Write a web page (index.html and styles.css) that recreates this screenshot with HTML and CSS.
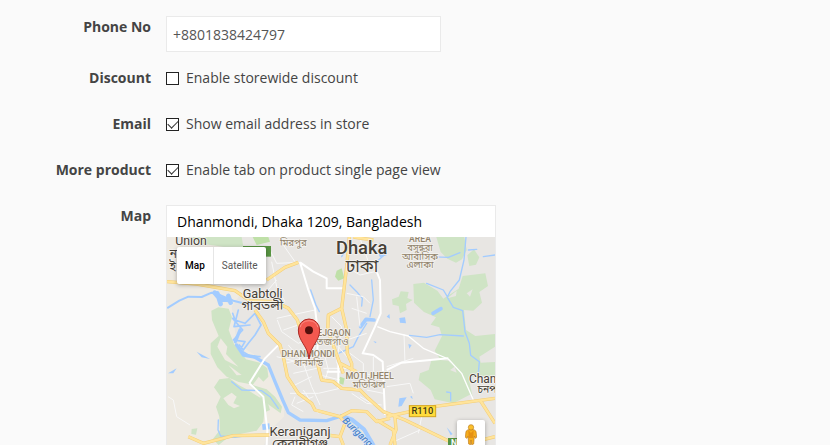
FILE: index.html
```html
<!DOCTYPE html>
<html lang="en">
<head>
<meta charset="utf-8">
<title>Store settings</title>
<link rel="stylesheet" href="styles.css">
</head>
<body>
<form class="settings">
  <div class="row">
    <label class="name" for="phone">Phone No</label>
    <input class="field" id="phone" type="text" value="+8801838424797">
  </div>
  <div class="row">
    <label class="name" for="discount">Discount</label>
    <label class="option"><input class="tick" id="discount" type="checkbox">Enable storewide discount</label>
  </div>
  <div class="row">
    <label class="name" for="email">Email</label>
    <label class="option"><input class="tick" id="email" type="checkbox" checked>Show email address in store</label>
  </div>
  <div class="row">
    <label class="name" for="more">More product</label>
    <label class="option"><input class="tick" id="more" type="checkbox" checked>Enable tab on product single page view</label>
  </div>
  <div class="row">
    <label class="name" for="address">Map</label>
    <div class="location">
      <input class="address" id="address" type="text" value="Dhanmondi, Dhaka 1209, Bangladesh">
      <div class="map">
        <svg class="canvas" viewBox="21 21 984 624" preserveAspectRatio="xMinYMin slice">
          <rect x="21" y="21" width="984" height="624" fill="#e8e6e3"/>
          <!-- western countryside -->
          <path fill="#efebe3" d="M21 21H175L215 90 250 180 215 230 230 340 300 385 340 430 372 520 372 560 330 600 312 645H21Z"/>
          <!-- parks and wetlands -->
          <g fill="#cfe4c5">
            <path d="M80 21H245L250 50H190L130 42 100 30Z"/>
            <path d="M154 242L175 232 206 236 216 262 206 300 222 342 258 388 300 398 322 415 325 440 310 455 296 440 278 465 320 478 345 500 366 530 362 550 320 520 268 462 236 456 200 440 172 412 152 372 152 340 176 318 156 270Z"/>
            <path d="M162 472L178 448 208 444 236 465 260 478 308 508 314 540 310 575 290 602 240 612 205 622 176 645 158 628 180 600 178 560 168 530 182 500Z"/>
            <path d="M300 500L322 514 330 540 318 545ZM95 597L112 595 108 614 94 612Z"/>
            <path d="M829 21H913L920 60 906 88 888 98 862 86 842 66Z"/>
            <path d="M942 58L958 82 948 104 928 108 922 76Z"/>
            <path d="M760 162L792 158 832 182 850 206 866 196 896 176 908 138 976 130 984 168 958 186 966 218 940 242 912 240 918 300 946 318 1005 312V350L958 380 962 398 1005 396V440H925L938 500 902 460 866 388 842 390 824 362 846 318 838 292 812 284 828 262 792 246 762 218Z"/>
            <path d="M815 388L866 392 902 438 934 492 880 520 824 508 812 480 776 450 780 430 806 420Z"/>
            <path d="M696 208L716 200 722 184 746 186 742 204 758 210 738 222 740 240 720 250 716 228 698 224Z"/>
          </g>
          <g fill="#efebe3">
            <path d="M182 325L202 350 198 372 235 410 195 390 172 350ZM205 405L245 435 230 436ZM190 505L215 488 230 500 220 520 240 528 222 535 205 525Z"/>
          </g>
          <g fill="#e8e6e3">
            <path d="M862 205L890 182 888 198ZM920 190L938 178 930 200ZM870 420L884 410 890 428ZM940 265L960 250 970 274 950 290Z"/>
          </g>
          <g fill="#bfe0a8">
            <path d="M530 122L545 115 553 145 535 152 525 140ZM540 440L554 445 550 464 532 458ZM278 21H325L330 35 290 45Z"/>
          </g>
          <!-- rivers -->
          <g fill="none" stroke="#a3ccff" stroke-linecap="round" stroke-linejoin="round">
            <path stroke-width="6" d="M24 233L58 212 85 200 125 201 155 188 182 196 220 212 270 225"/>
            <path stroke-width="14" d="M164 188L178 205 205 210M172 190L182 222M205 198L212 218"/>
            <path stroke-width="5" d="M218 250L225 270 255 280 285 250 303 285 285 315 265 340 250 360 238 345M218 265L248 300 220 330 255 335 240 360 270 378 300 380M235 240L222 290 270 285"/>
            <path stroke-width="10" d="M240 300L226 335M230 345L250 375 290 382"/>
            <path stroke-width="10" d="M285 382L325 405 345 455 368 510 385 548 420 570 500 572 545 558"/>
            <path stroke-width="12" d="M545 558L575 568 612 598 640 645"/>
            <path stroke-width="4" d="M215 455L245 480 305 482 330 500 355 535M175 570L174 600 182 618 225 622 250 618M452 180L468 225 478 245M570 165L590 185 607 205 605 228M635 150L640 210 630 260M620 280L595 320 580 350 535 370M918 21L912 90 898 150 870 185 862 202 880 232 908 242 915 305 928 340 932 376 958 395 955 430M748 316L800 322 840 314 910 318M800 160L850 180 862 200"/>
            <path stroke-width="4" d="M660 40L678 70 650 95M560 55L545 80M800 80L865 82 900 68M925 60L950 58M860 486L872 488 872 512M1005 75L970 80"/>
            <path stroke-width="11" d="M642 270L618 268 602 290M819 250L843 236"/>
          </g>
          <g fill="#a3ccff">
            <path d="M24 430L50 415 40 430ZM110 365L150 387 125 382ZM715 530L718 505 740 502 725 528ZM718 264L735 262 738 280 720 278ZM745 342L755 345 748 356ZM860 592L878 612 872 616ZM306 583L328 580 330 598 308 600ZM650 60L670 50 682 75 660 82ZM680 260L688 252 690 266ZM750 500L756 498 758 508ZM640 333L650 336 646 340Z"/>
          </g>
          <!-- minor streets -->
          <g fill="none" stroke="#f8f8f8" stroke-width="3" stroke-linejoin="round">
            <path d="M330 60L350 100 420 97M335 95L350 170 375 215M350 150L320 185M370 45L405 95M600 25L625 95 655 120M575 120L600 135 645 125M350 265L395 255 465 240M352 270L365 305 415 340M370 300L430 280M385 345L430 400 455 470 480 525M350 380L410 395M375 400L455 380 470 330M415 340L475 310M400 430L470 415M395 470L455 440M390 490L475 490 540 475M405 500L395 525 430 545M410 520L460 500M490 415H560M480 435L540 450M495 380L505 420 495 450M515 260L545 290 530 400M560 190L610 200 630 220M575 235L620 250M590 200L600 290M560 330L620 310M570 370L610 400 610 470M610 430L660 440M620 480L670 490M600 500L670 540M680 410L760 385M640 380L640 430M535 350L565 385M575 490L620 520 665 525M430 480L475 550M24 500L40 510 50 560 90 585M680 470L750 460 760 490M785 560L775 610M690 640L780 600M732 312L735 400"/>
          </g>
          <g fill="none" stroke="#fff" stroke-width="6" stroke-linejoin="round">
            <path d="M420 97L460 125 500 145V175H555M420 97L445 180 465 235 475 315 470 390M640 100L660 150 662 250 645 290 608 370 640 375 668 395 675 555M680 420L725 398 865 385M268 460L310 500 322 600 320 645M268 460L315 385 360 340M535 400V475M500 425H540"/>
            <path stroke-width="4" d="M652 290L690 305 745 318 790 355 865 387 905 430 940 510"/>
          </g>
          <!-- main roads -->
          <defs>
            <path id="roads" d="M21 155L110 162 225 182 268 212 345 215 385 235 412 270 425 310M320 150L375 112 415 97M285 240L310 275 325 310 360 345 372 390 382 440 415 490 455 520 465 540 540 560 575 542 620 545 650 575 690 565M568 21L560 110 545 235 505 255 503 300 525 360 550 430M545 235L560 300 562 370 575 400 575 425M470 390L485 450 520 455 545 475 600 480 625 505 670 545 735 570 880 640M540 400L590 425M680 560L750 545M820 530L1005 505M540 560L555 580 540 620 550 645M705 560L708 600 690 645M650 570L700 600 705 645M85 620L130 640 220 617 330 615M500 615L540 620M960 510L1005 580M925 640L1005 620M580 21L640 30"/>
          </defs>
          <use href="#roads" fill="none" stroke="#f3cd77" stroke-width="10" stroke-linejoin="round"/>
          <use href="#roads" fill="none" stroke="#ffe49b" stroke-width="7" stroke-linejoin="round"/>
          <rect x="249" y="48" width="84" height="32" fill="#589442"/>
          <rect x="864" y="624" width="60" height="30" fill="#589442"/>
          <rect x="748" y="527" width="79" height="33" fill="#ffdc3c" stroke="#d3a51f" stroke-width="3"/>
          <g class="place">
            <text x="93" y="46" font-size="37">Union</text>
            <text x="40" y="84" font-size="36">ন</text>
            <text x="38" y="122" font-size="36">ই</text>
            <text x="308" y="203" font-size="38">Gabtoli</text>
            <text x="307" y="239" font-size="39">গাবতলী</text>
            <text x="420" y="617" font-size="39">Keraniganj</text>
            <text x="420" y="653" font-size="39">কেরানীগঞ্জ</text>
            <text x="968" y="459" font-size="36">Chan</text>
            <text x="981" y="488" font-size="31">চনপ</text>
            <text class="city" x="605" y="71" font-size="55">Dhaka</text>
            <text x="606" y="127" font-size="52">ঢাকা</text>
          </g>
          <g class="district">
            <text x="400" y="47" font-size="29">মিরপুর</text>
            <text class="caps" x="780" y="37" font-size="26">AREA</text>
            <text x="780" y="63" font-size="28">বসুন্ধরা</text>
            <text x="780" y="89" font-size="29">আবাসিক</text>
            <text x="780" y="115" font-size="29">এলাকা</text>
            <text class="caps" x="514" y="318" font-size="26">TEJGAON</text>
            <text x="512" y="344" font-size="30">তেজগাঁও</text>
            <text class="caps" x="444" y="381" font-size="27">DHANMONDI</text>
            <text x="446" y="407" font-size="28">ধানমন্ডি</text>
            <text class="caps" x="629" y="447" font-size="27">MOTIJHEEL</text>
            <text x="627" y="474" font-size="29">মতিঝিল</text>
          </g>
          <text class="road" x="787" y="553" font-size="28">R110</text>
          <text class="highway" x="882" y="648" font-size="26">N</text>
          <text class="river" transform="translate(546 574) rotate(44)" font-size="29">Buriganga</text>
          <!-- location marker -->
          <path d="M447 387C444 347 415 335 415 300A32 33 0 0 1 479 300C479 335 450 347 447 387Z" fill="#f3584f" stroke="#ad2a24" stroke-width="3"/>
          <path d="M420 292A28 27 0 0 1 474 292" fill="none" stroke="#ff8f86" stroke-width="3"/>
          <circle cx="447" cy="301" r="12" fill="#54100d"/>
        </svg>
        <div class="types">
          <button class="type active" type="button">Map</button>
          <button class="type" type="button">Satellite</button>
        </div>
        <button class="pegman" type="button" aria-label="Street View">
          <svg viewBox="0 0 36 63" width="12" height="21">
            <path d="M9 17L3 22 1 40 6 43 9 36 11 60 17 62 18 48 20 62 26 60 28 36 31 43 35 40 33 22 27 17Z" fill="#f6ad1d" stroke="#bd7b1d" stroke-width="2"/>
            <path d="M10 19L18 27 26 19 25 42H11Z" fill="#e59113"/>
            <circle cx="18" cy="10" r="8" fill="#fbc02d" stroke="#b97c1c" stroke-width="2"/>
          </svg>
        </button>
      </div>
    </div>
  </div>
</form>
</body>
</html>
```
FILE: styles.css
```css
* {
  box-sizing: border-box;
}

body {
  margin: 0;
  background: #fafafa;
  color: #444;
  font: 14px/22px "Open Sans", sans-serif;
}

.settings {
  display: flex;
  flex-direction: column;
  gap: 15px;
  padding-top: 16px;
}

.row {
  display: grid;
  grid-template-columns: 151px minmax(0, 1fr);
  column-gap: 15px;
  align-items: start;
  min-height: 31px;
}

.name {
  font-weight: 700;
  text-align: right;
}

.field {
  width: 100%;
  max-width: 275px;
  height: 36px;
  padding: 0 6px;
  border: 1px solid #eaeaea;
  background: #fff;
  color: #555;
  font: inherit;
}

.option {
  display: flex;
  align-items: center;
  gap: 7px;
}

.tick {
  appearance: none;
  display: grid;
  place-items: center;
  width: 13px;
  height: 13px;
  margin: 0;
  border: 1px solid #222;
  background: #fff;
}

.tick:checked::before {
  content: "";
  width: 9px;
  height: 5px;
  border: solid #333;
  border-width: 0 0 1px 1px;
  transform: translateY(-1px) rotate(-45deg);
}

.location {
  width: 100%;
  max-width: 330px;
  border: 1px solid #eaeaea;
  border-bottom: 0;
}

.address {
  display: block;
  width: 100%;
  height: 31px;
  padding: 0 10px;
  border: 0;
  background: #fff;
  color: #000;
  font: inherit;
}

.map {
  position: relative;
  height: 208px;
  overflow: hidden;
}

.canvas {
  display: block;
  width: 100%;
  height: 100%;
}

.canvas text {
  font-family: Roboto, "Noto Sans Bengali", "Noto Sans", sans-serif;
  text-anchor: middle;
  paint-order: stroke;
  stroke: #f5f3f0;
  stroke-width: 5px;
  stroke-linejoin: round;
}

.place {
  fill: #454037;
}

.canvas .city {
  font-weight: 500;
}

.district {
  fill: #91836b;
}

.canvas .caps {
  font-weight: 500;
}

.canvas .road {
  fill: #443c18;
  font-weight: 500;
  stroke: none;
}

.canvas .highway {
  fill: #fff;
  font-weight: 700;
  stroke: none;
}

.canvas .river {
  fill: #4279bd;
  font-style: italic;
  text-anchor: start;
  stroke: #c3ddff;
  stroke-width: 3px;
}

.types {
  position: absolute;
  top: 10px;
  left: 10px;
  display: flex;
  border-radius: 2px;
  background: #fff;
  box-shadow: 0 1px 4px rgba(0, 0, 0, 0.3);
}

.type {
  height: 37px;
  padding: 0 8px;
  border: 0;
  background: none;
  color: #565656;
  font: 10px Roboto, sans-serif;
}

.type + .type {
  border-left: 1px solid #e6e6e6;
}

.active {
  color: #000;
  font-weight: 500;
}

.pegman {
  position: absolute;
  right: 10px;
  bottom: -3px;
  display: grid;
  place-items: center;
  width: 28px;
  height: 28px;
  padding: 0;
  border: 0;
  border-radius: 2px;
  background: #fff;
  box-shadow: 0 1px 4px rgba(0, 0, 0, 0.3);
}
```
